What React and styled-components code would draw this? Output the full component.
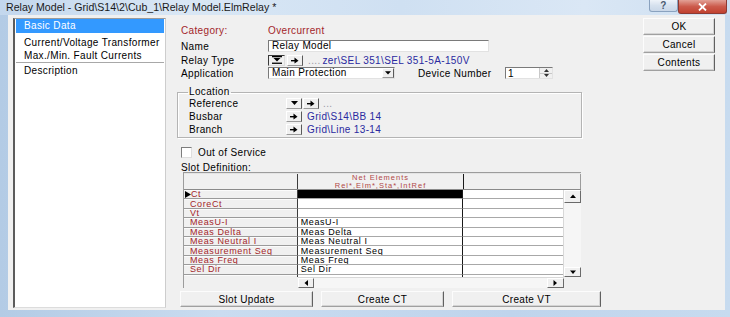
import React from "react";
import styled, { createGlobalStyle } from "styled-components";

const GlobalStyle = createGlobalStyle`
  html, body {
    margin: 0;
    padding: 0;
    background: #fff;
  }
  body {
    font-family: "Liberation Sans", Arial, sans-serif;
    font-size: 10px;
    letter-spacing: 0.35px;
    color: #000;
  }
`;

const Window = styled.div`
  width: 730px;
  height: 317px;
  display: flex;
  flex-direction: column;
  overflow: hidden;
  background: linear-gradient(to right, #b3cbe5, #cadcf0 30%, #bfd4ec 70%, #c7dbef);
`;

const TitleBar = styled.div`
  height: 15px;
  display: flex;
  align-items: flex-start;
  background: linear-gradient(to right, #c3d7ed, #d9e7f5 25%, #cfe0f2 55%, #dae7f5 80%, #cddff1);
`;

const TitleText = styled.span`
  margin: 1px 0 0 6px;
  font-size: 10.6px;
  letter-spacing: 0;
  line-height: 13px;
  color: #1a1a1a;
  white-space: nowrap;
`;

const TitleButton = styled.div`
  margin-left: ${(p) => (p.$first ? "auto" : "0")};
  margin-right: ${(p) => p.$mr || 0}px;
  width: ${(p) => p.$w}px;
  height: ${(p) => p.$h}px;
  display: flex;
  align-items: center;
  justify-content: center;
  box-sizing: border-box;
  border: 1px solid ${(p) => (p.$close ? "#8c3a33" : "#8aa2bf")};
  border-top: none;
  border-radius: 0 0 3px 3px;
  background: ${(p) =>
    p.$close
      ? "linear-gradient(to bottom, #e2a196, #cc5b4c 50%, #c1412f)"
      : "linear-gradient(to bottom, #eef3f9, #d6e1ee 50%, #c9d7e8)"};
  color: #4a5a70;
  font-size: 10px;
  font-weight: bold;
`;

const Frame = styled.div`
  flex: 1;
  display: flex;
  padding: 0 5px 7px 8px;
`;

const Body = styled.div`
  flex: 1;
  display: flex;
  background: #f0f0f0;
  padding: 3px 0 0 5px;
`;

const NavList = styled.div`
  width: 153px;
  height: 290px;
  box-sizing: border-box;
  background: #fff;
  border-left: 2px solid #5c5c5c;
  border-top: 1px solid #9a9a9a;
  border-right: 1px solid #cdcdcd;
  border-bottom: 1px solid #dcdcdc;
  padding: 0 1px;
  display: flex;
  flex-direction: column;
`;

const NavItem = styled.div`
  height: ${(p) => p.$h}px;
  margin-top: ${(p) => p.$mt || 0}px;
  line-height: ${(p) => p.$h}px;
  padding-left: 8px;
  white-space: nowrap;
  background: ${(p) => (p.$active ? "#3399ff" : "transparent")};
  color: ${(p) => (p.$active ? "#fff" : "#000")};
  border-bottom: ${(p) => (p.$sep ? "1px solid #a8a8a8" : "none")};
`;

const Main = styled.div`
  margin-left: 11px;
  width: 430px;
  display: flex;
  flex-direction: column;
`;

const Row = styled.div`
  display: flex;
  align-items: center;
  height: ${(p) => p.$h || 12}px;
  margin-top: ${(p) => p.$mt || 0}px;
  margin-left: 4px;
  white-space: nowrap;
`;

const Label = styled.span`
  width: ${(p) => p.$w || 87}px;
  margin-left: ${(p) => p.$ml || 0}px;
  flex-shrink: 0;
  color: ${(p) => (p.$red ? "#a3262a" : "#000")};
`;

const RedText = styled.span`
  color: #a3262a;
`;

const TextInput = styled.div`
  width: ${(p) => p.$w}px;
  height: 12px;
  box-sizing: border-box;
  background: #fff;
  border-top: 1px solid #7a7a7a;
  border-left: 1px solid #7a7a7a;
  border-right: 1px solid #e2e2e2;
  border-bottom: 1px solid #e2e2e2;
  padding-left: 3px;
  line-height: 10px;
  display: flex;
  align-items: center;
  justify-content: space-between;
`;

const SmallButton = styled.div`
  width: ${(p) => p.$w || 16}px;
  height: ${(p) => p.$h || 11}px;
  margin-left: ${(p) => p.$ml || 0}px;
  box-sizing: border-box;
  display: flex;
  align-items: center;
  justify-content: center;
  background: #f0f0f0;
  border-top: 1px solid ${(p) => (p.$pressed ? "#3a3a3a" : "#fff")};
  border-left: 1px solid ${(p) => (p.$pressed ? "#3a3a3a" : "#fff")};
  border-right: 1px solid ${(p) => (p.$pressed ? "#dcdcdc" : "#5a5a5a")};
  border-bottom: 1px solid ${(p) => (p.$pressed ? "#dcdcdc" : "#9a9a9a")};
  flex-shrink: 0;
`;

const Dots = styled.span`
  margin-left: ${(p) => p.$ml || 4}px;
  color: #9a9aa6;
`;

const LinkText = styled.span`
  margin-left: ${(p) => p.$ml || 0}px;
  color: #2a2aa0;
`;

const SpinBox = styled.div`
  width: 48px;
  height: 12px;
  margin-left: 13px;
  box-sizing: border-box;
  background: #fff;
  border-top: 1px solid #7a7a7a;
  border-left: 1px solid #7a7a7a;
  border-right: 1px solid #e2e2e2;
  border-bottom: 1px solid #e2e2e2;
  display: flex;
  align-items: center;
  padding-left: 2px;
`;

const SpinArrows = styled.div`
  margin-left: auto;
  width: 12px;
  height: 10px;
  display: flex;
  flex-direction: column;
  background: #f0f0f0;
  border-left: 1px solid #c8c8c8;
`;

const SpinHalf = styled.div`
  flex: 1;
  display: flex;
  align-items: center;
  justify-content: center;
  border-bottom: ${(p) => (p.$top ? "1px solid #c8c8c8" : "none")};
`;

const GroupBox = styled.fieldset`
  margin: 8px 0 0 0;
  width: 405px;
  box-sizing: border-box;
  border: 1px solid #b4b4b4;
  box-shadow: inset 1px 1px 0 #fff, 1px 1px 0 #fff;
  padding: 0 0 1px 11px;
  min-width: 0;
`;

const Legend = styled.legend`
  padding: 0 1px;
  margin-left: -1px;
  line-height: 10px;
  font-size: 10px;
`;

const GroupRow = styled.div`
  display: flex;
  align-items: center;
  height: 13px;
  white-space: nowrap;
`;

const CheckBox = styled.div`
  width: 11px;
  height: 11px;
  box-sizing: border-box;
  background: #fff;
  border-top: 1px solid #7d7d7d;
  border-left: 1px solid #7d7d7d;
  border-right: 1px solid #dedede;
  border-bottom: 1px solid #dedede;
  margin-right: 6px;
`;

const Grid = styled.div`
  margin: 0 0 0 6px;
  width: 398px;
  height: 116px;
  box-sizing: border-box;
  border-top: 1px solid #9c9c9c;
  border-left: 1px solid #9c9c9c;
  background: #f0f0f0;
  display: flex;
  flex-direction: column;
  font-size: 9px;
  letter-spacing: 0.6px;
`;

const HeaderRow = styled.div`
  height: 17px;
  display: flex;
  box-sizing: border-box;
  border-top: 1px solid #e4e4e4;
  border-bottom: 1px solid #8a8a8a;
`;

const HeaderCell = styled.div`
  width: ${(p) => (p.$w ? `${p.$w}px` : "auto")};
  flex: ${(p) => (p.$w ? "none" : "1")};
  box-sizing: border-box;
  border-right: 1px solid ${(p) => p.$line || "#9c9c9c"};
  display: flex;
  flex-direction: column;
  align-items: center;
  justify-content: center;
  color: #b04848;
  font-size: 7.5px;
  letter-spacing: 1px;
  line-height: 7.5px;
  white-space: nowrap;
  overflow: hidden;
`;

const GridBody = styled.div`
  height: 87px;
  display: flex;
`;

const RowsArea = styled.div`
  flex: 1;
  overflow: hidden;
`;

const GridRow = styled.div`
  height: 9.4px;
  display: flex;
`;

const RowHead = styled.div`
  width: 114px;
  box-sizing: border-box;
  border-right: 1px solid #3c3c3c;
  border-bottom: 1px solid #9a9a9a;
  background: #f0f0f0;
  box-shadow: inset 0 1px 0 #fbfbfb;
  color: #a3262a;
  line-height: 8px;
  padding-left: ${(p) => (p.$marker ? 1 : 6)}px;
  display: flex;
  align-items: center;
  white-space: nowrap;
  overflow: hidden;
`;

const DataCell = styled.div`
  width: ${(p) => p.$w}px;
  box-sizing: border-box;
  border-right: ${(p) => (p.$line ? "1px solid #1a1a1a" : "none")};
  border-bottom: 1px solid #a8a8a8;
  background: ${(p) => (p.$selected ? "#000" : "#fff")};
  line-height: 8px;
  padding-left: 3px;
  display: flex;
  align-items: center;
  white-space: nowrap;
  overflow: hidden;
`;

const VScroll = styled.div`
  width: 17px;
  display: flex;
  flex-direction: column;
  background: #f6f6f6;
  border-left: 1px solid #d8d8d8;
`;

const ScrollBtn = styled.div`
  height: ${(p) => p.$h || 10}px;
  width: ${(p) => (p.$w ? `${p.$w}px` : "auto")};
  box-sizing: border-box;
  background: #f0f0f0;
  border-top: 1px solid #fff;
  border-left: 1px solid #fff;
  border-right: 1px solid #6a6a6a;
  border-bottom: 1px solid #6a6a6a;
  display: flex;
  align-items: center;
  justify-content: center;
  flex-shrink: 0;
`;

const Track = styled.div`
  flex: 1;
`;

const GridFooter = styled.div`
  height: 11px;
  display: flex;
`;

const FooterBlank = styled.div`
  width: ${(p) => p.$w}px;
  flex-shrink: 0;
`;

const HScroll = styled.div`
  width: 266px;
  display: flex;
  background: #f6f6f6;
  border-top: 1px solid #d8d8d8;
`;

const ButtonBar = styled.div`
  display: flex;
  margin: 3px 0 0 3px;
  gap: 8px;
`;

const PushButton = styled.div`
  width: ${(p) => p.$w}px;
  height: ${(p) => p.$h || 16}px;
  box-sizing: border-box;
  display: flex;
  align-items: center;
  justify-content: center;
  background: #f0f0f0;
  border-top: 1px solid #fcfcfc;
  border-left: 1px solid #fcfcfc;
  border-right: 1px solid #606060;
  border-bottom: 1px solid #a0a0a0;
  box-shadow: inset -1px -1px 0 #d4d4d4;
  white-space: nowrap;
  flex-shrink: 0;
`;

const SideButtons = styled.div`
  margin: 0 10px 0 auto;
  display: flex;
  flex-direction: column;
  gap: 1px;
`;

const ArrowIcon = () => (
  <svg width="8" height="7" viewBox="0 0 8 7">
    <rect x="0" y="3" width="4" height="1.4" fill="#000" />
    <polygon points="3.5,0.5 7.5,3.7 3.5,6.5" fill="#000" />
  </svg>
);

const DownIcon = ({ size = 7 }) => (
  <svg width={size} height={size / 2 + 1} viewBox="0 0 8 5">
    <polygon points="0,0 8,0 4,4.5" fill="#000" />
  </svg>
);

const ListPickIcon = () => (
  <svg width="10" height="8" viewBox="0 0 10 8">
    <rect x="0" y="0" width="10" height="1.3" fill="#000" />
    <polygon points="1.5,2 8.5,2 5,5.6" fill="#000" />
    <rect x="0" y="6.6" width="10" height="1.3" fill="#000" />
  </svg>
);

const Tri = ({ dir }) => {
  const pts = {
    up: "0,4 6,4 3,0.5",
    down: "0,0.5 6,0.5 3,4",
    left: "4,0 4,6 0.5,3",
    right: "0.5,0 0.5,6 4,3",
  }[dir];
  const vertical = dir === "up" || dir === "down";
  return (
    <svg width={vertical ? 6 : 5} height={vertical ? 5 : 6} viewBox={vertical ? "0 0 6 5" : "0 0 5 6"}>
      <polygon points={pts} fill="#000" />
    </svg>
  );
};

const slotRows = [
  ["Ct", ""],
  ["CoreCt", ""],
  ["Vt", ""],
  ["MeasU-I", "MeasU-I"],
  ["Meas Delta", "Meas Delta"],
  ["Meas Neutral I", "Meas Neutral I"],
  ["Measurement Seq", "Measurement Seq"],
  ["Meas Freq", "Meas Freq"],
  ["Sel Dir", "Sel Dir"],
  ["", ""],
];

const App = () => {
  return (
    <Window>
      <GlobalStyle />
      <TitleBar>
        <TitleText>Relay Model - Grid\S14\2\Cub_1\Relay Model.ElmRelay *</TitleText>
        <TitleButton $first $w={29} $h={12}>?</TitleButton>
        <TitleButton $close $w={49} $h={14} $mr={3}>
          <svg width="9" height="8" viewBox="0 0 9 8">
            <path d="M1 0.5 L8 7.5 M8 0.5 L1 7.5" stroke="#fff" strokeWidth="1.8" />
          </svg>
        </TitleButton>
      </TitleBar>
      <Frame>
        <Body>
          <NavList>
            <NavItem $h={14} $active>Basic Data</NavItem>
            <NavItem $h={13} $mt={3}>Current/Voltage Transformer</NavItem>
            <NavItem $h={13} $sep>Max./Min. Fault Currents</NavItem>
            <NavItem $h={14} $mt={1}>Description</NavItem>
          </NavList>

          <Main>
            <Row $mt={6}>
              <Label $red>Category:</Label>
              <RedText>Overcurrent</RedText>
            </Row>
            <Row $mt={4}>
              <Label>Name</Label>
              <TextInput $w={221}>Relay Model</TextInput>
            </Row>
            <Row $mt={2}>
              <Label>Relay Type</Label>
              <SmallButton $w={17} $pressed>
                <ListPickIcon />
              </SmallButton>
              <SmallButton $ml={2}>
                <ArrowIcon />
              </SmallButton>
              <Dots $ml={5}>....</Dots>
              <LinkText $ml={2}>zer\SEL 351\SEL 351-5A-150V</LinkText>
            </Row>
            <Row $mt={1}>
              <Label>Application</Label>
              <TextInput $w={127}>
                Main Protection
                <SmallButton $w={12} $h={10}>
                  <DownIcon size={6} />
                </SmallButton>
              </TextInput>
              <Label $w={74} $ml={23}>Device Number</Label>
              <SpinBox>
                1
                <SpinArrows>
                  <SpinHalf $top>
                    <svg width="5" height="3" viewBox="0 0 5 3"><polygon points="0,3 5,3 2.5,0" fill="#333" /></svg>
                  </SpinHalf>
                  <SpinHalf>
                    <svg width="5" height="3" viewBox="0 0 5 3"><polygon points="0,0 5,0 2.5,3" fill="#333" /></svg>
                  </SpinHalf>
                </SpinArrows>
              </SpinBox>
            </Row>

            <GroupBox>
              <Legend>Location</Legend>
              <GroupRow>
                <Label $w={97}>Reference</Label>
                <SmallButton>
                  <DownIcon />
                </SmallButton>
                <SmallButton $ml={1}>
                  <ArrowIcon />
                </SmallButton>
                <Dots $ml={4}>...</Dots>
              </GroupRow>
              <GroupRow>
                <Label $w={97}>Busbar</Label>
                <SmallButton>
                  <ArrowIcon />
                </SmallButton>
                <LinkText $ml={5}>Grid\S14\BB 14</LinkText>
              </GroupRow>
              <GroupRow>
                <Label $w={97}>Branch</Label>
                <SmallButton>
                  <ArrowIcon />
                </SmallButton>
                <LinkText $ml={5}>Grid\Line 13-14</LinkText>
              </GroupRow>
            </GroupBox>

            <Row $mt={9} $h={11}>
              <CheckBox />
              Out of Service
            </Row>
            <Row $mt={4} $h={10}>Slot Definition:</Row>

            <Grid>
              <HeaderRow>
                <HeaderCell $w={114} $line="#3c3c3c" />
                <HeaderCell $w={166} $line="#1a1a1a">
                  <span>Net Elements</span>
                  <span>Rel*,Elm*,Sta*,IntRef</span>
                </HeaderCell>
                <HeaderCell />
              </HeaderRow>
              <GridBody>
                <RowsArea>
                  {slotRows.map(([name, value], i) => (
                    <GridRow key={i}>
                      <RowHead $marker={i === 0}>
                        {i === 0 && (
                          <svg width="6" height="7" viewBox="0 0 6 7">
                            <polygon points="0,0 6,3.5 0,7" fill="#000" />
                          </svg>
                        )}
                        {name}
                      </RowHead>
                      <DataCell $w={166} $line $selected={i === 0}>
                        {value}
                      </DataCell>
                      <DataCell $w={100} />
                    </GridRow>
                  ))}
                </RowsArea>
                <VScroll>
                  <ScrollBtn $h={13}>
                    <Tri dir="up" />
                  </ScrollBtn>
                  <Track />
                  <ScrollBtn $h={10}>
                    <Tri dir="down" />
                  </ScrollBtn>
                </VScroll>
              </GridBody>
              <GridFooter>
                <FooterBlank $w={114} />
                <HScroll>
                  <ScrollBtn $w={16}>
                    <Tri dir="left" />
                  </ScrollBtn>
                  <Track />
                  <ScrollBtn $w={17}>
                    <Tri dir="right" />
                  </ScrollBtn>
                </HScroll>
              </GridFooter>
            </Grid>

            <ButtonBar>
              <PushButton $w={133}>Slot Update</PushButton>
              <PushButton $w={123}>Create CT</PushButton>
              <PushButton $w={149}>Create VT</PushButton>
            </ButtonBar>
          </Main>

          <SideButtons>
            <PushButton $w={72} $h={17}>OK</PushButton>
            <PushButton $w={72} $h={17}>Cancel</PushButton>
            <PushButton $w={72} $h={17}>Contents</PushButton>
          </SideButtons>
        </Body>
      </Frame>
    </Window>
  );
};

export default App;
